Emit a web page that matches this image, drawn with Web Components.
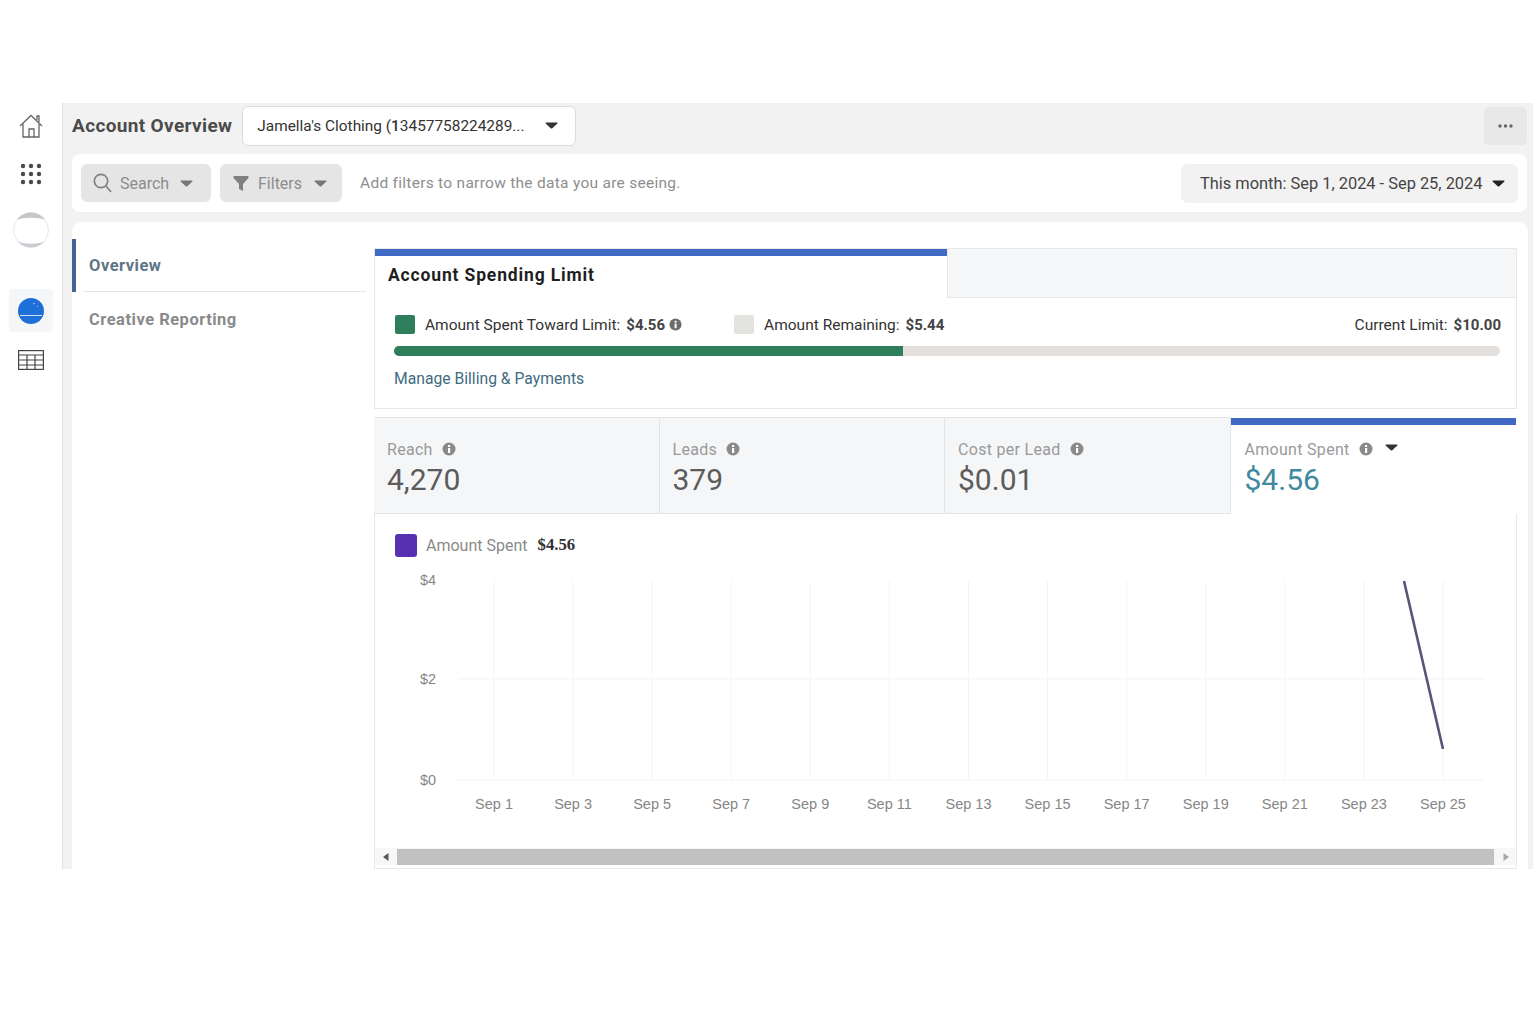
<!DOCTYPE html>
<html>
<head>
<meta charset="utf-8">
<title>Account Overview</title>
<style>
html,body{margin:0;background:#fff;font-family:Roboto,"Liberation Sans",sans-serif;}
body{padding:103px 0 155px 0;}
</style>
</head>
<body>
<ads-app>
	<ads-rail slot="rail"></ads-rail>
	<ads-header slot="main"></ads-header>
	<ads-toolbar slot="main"></ads-toolbar>
	<ads-panel slot="main">
		<ads-sidenav slot="nav"></ads-sidenav>
		<ads-spend slot="content"></ads-spend>
		<ads-metrics slot="content"></ads-metrics>
		<ads-chart slot="content"></ads-chart>
	</ads-panel>
</ads-app>

<script>
'use strict';

function define(name,css,html){
	customElements.define(name,class extends HTMLElement{
		constructor(){
			super();
			let shadow = this.attachShadow({mode: 'open'});
			shadow.innerHTML = '<style>'+css+'</style>'+html;
		}
	});
}

define('drop-caret',`
:host{display:inline-block;width:13px;height:7px;flex:none;}
svg{display:block;width:100%;height:100%;}
`,'<svg viewBox="0 0 13 7"><path d="M1 .5h11a.6.6 0 0 1 .4 1L7 6.4a.8.8 0 0 1-1 0L.6 1.5A.6.6 0 0 1 1 .5z" fill="currentColor"/></svg>');

define('info-dot',`
:host{display:inline-block;width:14px;height:14px;flex:none;}
svg{display:block;width:100%;height:100%;}
`,'<svg viewBox="0 0 14 14"><circle cx="7" cy="7" r="6.5" fill="currentColor"/><rect x="6" y="6" width="2.2" height="5" fill="#fff"/><rect x="6" y="3" width="2.2" height="2" fill="#fff"/></svg>');

define('ads-app',`
:host{display:flex;height:766px;width:1536px;}
.rail{width:62px;flex:none;}
.main{width:1471px;flex:none;background:#f2f2f2;border-left:1px solid #e3e3e3;box-sizing:border-box;display:flex;flex-direction:column;}
`,'<div class="rail"><slot name="rail"></slot></div><div class="main"><slot name="main"></slot></div>');

define('ads-rail',`
:host{display:flex;flex-direction:column;align-items:center;padding-top:10px;}
.cell{display:flex;align-items:center;justify-content:center;width:44px;}
.home{height:25px;}
.apps{height:23px;margin-top:24px;}
.acct{height:36px;margin-top:27px;}
.active{height:43px;margin-top:41px;background:#f4f6f8;border-radius:4px;}
.table{height:22px;margin-top:17px;}
svg{display:block;}
`,`
<div class="cell home"><svg width="26" height="26" viewBox="0 0 26 26" fill="none" stroke="#666" stroke-width="1.3"><path d="M2 13 13 2.5 24 13"/><path d="M5 11v13h16V11"/><path d="M11 24v-8h5v8"/><path d="M19 7V3h2v6"/></svg></div>
<div class="cell apps"><svg width="22" height="22" viewBox="0 0 22 22" fill="#4a4a4a"><circle cx="3" cy="3" r="2.2"/><circle cx="11" cy="3" r="2.2"/><circle cx="19" cy="3" r="2.2"/><circle cx="3" cy="11" r="2.2"/><circle cx="11" cy="11" r="2.2"/><circle cx="19" cy="11" r="2.2"/><circle cx="3" cy="19" r="2.2"/><circle cx="11" cy="19" r="2.2"/><circle cx="19" cy="19" r="2.2"/></svg></div>
<div class="cell acct"><svg width="36" height="36" viewBox="0 0 36 36"><circle cx="18" cy="18" r="17.3" fill="#fff" stroke="#e6e8ea" stroke-width="1"/><path d="M3.650 8A17.500 17.500 0 0 1 32.350 8C26 5 10 5 3.650 8z" fill="#c4c8cc"/><path d="M4.400 29C10 32.500 26 32.500 31.600 29A17.500 17.500 0 0 1 4.400 29z" fill="#c9ccd0"/></svg></div>
<div class="cell active"><svg width="28" height="28" viewBox="0 0 28 28"><circle cx="14" cy="14" r="13" fill="#1f6fd8"/><path d="M3 18.500h22" stroke="#cfe0f5" stroke-width="1"/><path d="M16 7l2-1M20 10l1-1" stroke="#9cc0ee" stroke-width="1"/></svg></div>
<div class="cell table"><svg width="26" height="20" viewBox="0 0 26 20" fill="none" stroke="#444" stroke-width="1.200"><rect x=".6" y=".6" width="24.800" height="18.800"/><path d="M.6 5h24.800M.6 10h24.800M.6 15h24.800M9 5v14.400M17 5v14.400"/></svg></div>
`);

define('ads-header',`
:host{display:flex;align-items:center;height:51px;box-sizing:border-box;padding:0 6px 6px 9px;color:#444;flex:none;}
h1{margin:0 10px 0 0;font:700 19px Roboto,sans-serif;letter-spacing:.36px;color:#4b4b4b;white-space:nowrap;}
.select{display:flex;align-items:center;justify-content:space-between;box-sizing:border-box;width:334px;height:40px;padding:0 17px 0 14px;background:#fff;border:1px solid #dcdcdc;border-radius:6px;font-size:15.400px;color:#333;}
b{font-weight:500;}
.more{margin-left:auto;width:43px;height:38px;display:flex;align-items:center;justify-content:center;background:#e8e8e8;border-radius:5px;}
svg{display:block;}
`,`
<h1>Account Overview</h1>
<div class="select"><span>Jamella's Clothing (<b>1</b>3457758224289...</span><drop-caret></drop-caret></div>
<div class="more"><svg width="15" height="4" viewBox="0 0 15 4" fill="#666"><circle cx="2" cy="2" r="1.700"/><circle cx="7.500" cy="2" r="1.700"/><circle cx="13" cy="2" r="1.700"/></svg></div>
`);

define('ads-toolbar',`
:host{display:flex;align-items:center;gap:9px;box-sizing:border-box;flex:none;height:58px;margin-left:9px;width:1455px;padding:0 9px;background:#fff;border-radius:8px;}
.btn{display:flex;align-items:center;box-sizing:border-box;height:38px;background:#e5e5e5;border-radius:6px;color:#8c8c8c;font-size:16px;padding-left:12px;gap:8px;}
.search{width:130px;}
.filters{width:122px;gap:9px;padding-left:13px;}
drop-caret{color:#777;margin-left:3px;}
.hint{margin-left:9px;color:#8e8e8e;font-size:15.500px;letter-spacing:.28px;}
.date{margin-left:auto;display:flex;align-items:center;justify-content:space-between;box-sizing:border-box;width:337px;height:39px;padding:0 13px 0 19px;background:#f2f2f2;border-radius:7px;color:#444;font-size:16.400px;white-space:nowrap;}
.date drop-caret{color:#222;margin:0;}
svg{display:block;flex:none;}
`,`
<div class="btn search"><svg width="19" height="20" viewBox="0 0 19 20" fill="none" stroke="#808080" stroke-width="1.700"><circle cx="8" cy="8" r="6.700"/><path d="M13 13l5 6"/></svg><span>Search</span><drop-caret></drop-caret></div>
<div class="btn filters"><svg width="16" height="17" viewBox="0 0 16 17" fill="#808080"><path d="M.5 1h15v2L10 9v7l-4-2V9L.5 3z"/></svg><span>Filters</span><drop-caret></drop-caret></div>
<div class="hint">Add filters to narrow the data you are seeing.</div>
<div class="date"><span>This month: Sep 1, 2024 - Sep 25, 2024</span><drop-caret></drop-caret></div>
`);

define('ads-panel',`
:host{display:flex;flex:1;min-height:0;margin:10px 0 0 9px;width:1456px;background:#fff;border-radius:10px 10px 0 0;box-sizing:border-box;}
.nav{width:302px;flex:none;padding-top:17px;box-sizing:border-box;}
.content{width:1143px;flex:none;padding-top:26px;display:flex;flex-direction:column;box-sizing:border-box;}
`,'<div class="nav"><slot name="nav"></slot></div><div class="content"><slot name="content"></slot></div>');

define('ads-sidenav',`
:host{display:block;}
.item{display:flex;align-items:center;font:700 16.500px Roboto,sans-serif;letter-spacing:.5px;padding-left:17px;}
.on{height:53px;color:#5f7485;border-left:4px solid #46628f;padding-left:13px;box-sizing:border-box;position:relative;margin-right:8px;}
.on::after{content:"";position:absolute;left:8px;right:0;bottom:0;height:1px;background:#e4e4e4;}
.off{height:55px;color:#8a8a8a;}
`,'<div class="item on">Overview</div><div class="item off">Creative Reporting</div>');

define('ads-spend',`
:host{display:block;flex:none;height:161px;box-sizing:border-box;border:1px solid #e8e8e8;color:#333;}
.tabs{display:flex;height:49px;}
.tab{width:572px;flex:none;box-sizing:border-box;border-top:7px solid #4169c4;padding:9px 0 0 13px;font:700 17.500px Roboto,sans-serif;color:#1f1f1f;letter-spacing:.85px;}
.rest{flex:1;background:#f5f6f7;border-left:1px solid #e8e8e8;border-bottom:1px solid #e8e8e8;}
.legend{display:flex;align-items:center;height:37px;margin:8px 0 3px 0;padding:0 15px 0 20px;font-size:15.500px;}
.sw{width:20px;height:19px;border-radius:2px;margin-right:10px;flex:none;}
b{font-weight:700;font-size:15px;margin-left:6px;color:#444;}
info-dot{width:13px;height:13px;color:#6c6c6c;margin-left:4px;}
.second{margin-left:52px;}
.limit{margin-left:auto;}
.bar{height:10px;margin:0 16px 0 19px;background:#e2dfdc;border-radius:5px;overflow:hidden;}
.fill{width:46%;height:100%;background:#2e7d5b;}
a{display:block;margin:13px 0 0 19px;color:#3f6c80;font-size:15.700px;}
`,`
<div class="tabs"><div class="tab">Account Spending Limit</div><div class="rest"></div></div>
<div class="legend">
	<span class="sw" style="background:#2e7d5b"></span><span>Amount Spent Toward Limit:</span><b>$4.56</b><info-dot></info-dot>
	<span class="sw second" style="background:#e3e3e0"></span><span>Amount Remaining:</span><b>$5.44</b>
	<span class="limit">Current Limit:</span><b>$10.00</b>
</div>
<div class="bar"><div class="fill"></div></div>
<a>Manage Billing &amp; Payments</a>
`);

define('metric-tab',`
:host{display:block;box-sizing:border-box;width:285.500px;height:97px;padding:22px 13px 0;background:#f5f6f7;border-right:1px solid #e4e4e4;border-bottom:1px solid #e4e4e4;border-top:1px solid #e4e4e4;}
:host([active]){background:#fff;border:0;border-top:7px solid #4169c4;height:96px;margin-top:1px;padding:15px 13px 0 14px;}
.label{display:flex;align-items:center;gap:9px;height:18px;color:#9a9a9a;font-size:16px;letter-spacing:.3px;}
info-dot{color:#8a8a8a;}
.value{margin-top:4px;font-size:30px;line-height:36px;color:#5c5c5c;}
:host([active]) .value{color:#41899e;}
`,`
<div class="label"><slot name="label"></slot><info-dot></info-dot><slot name="caret"></slot></div>
<div class="value"><slot></slot></div>
`);

define('ads-metrics',`
:host{display:flex;flex:none;margin-top:8px;height:97px;}
drop-caret{color:#333;margin:-4px 0 0 3px;}
`,`
<metric-tab><span slot="label">Reach</span>4,270</metric-tab>
<metric-tab><span slot="label">Leads</span>379</metric-tab>
<metric-tab><span slot="label">Cost per Lead</span>$0.01</metric-tab>
<metric-tab active><span slot="label">Amount Spent</span><drop-caret slot="caret"></drop-caret>$4.56</metric-tab>
`);

define('ads-chart',`
:host{display:flex;flex-direction:column;flex:1;min-height:0;box-sizing:border-box;border:1px solid #e8e8e8;border-top:0;}
.legend{display:flex;align-items:center;height:24px;padding:19px 0 0 20px;flex:none;font-size:16px;color:#8a8a8a;}
.sw{width:22px;height:23px;border-radius:3px;background:#5530b0;margin-right:9px;}
b{font:700 16.800px "Liberation Serif",serif;color:#333;margin-left:10px;}
svg{display:block;flex:1;min-height:0;width:100%;}
text{font:14.500px "Liberation Sans",sans-serif;fill:#868686;}
.scroll{flex:none;display:flex;align-items:center;height:17px;margin:0 0 3px 0;background:#f7f7f7;}
.arrow{width:22px;height:17px;display:flex;align-items:center;justify-content:center;flex:none;}
.thumb{width:1097px;height:16px;background:#c1c1c1;flex:none;}
.end{width:21px;margin-left:auto;}
`,`
<div class="legend"><span class="sw"></span><span>Amount Spent</span><b>$4.56</b></div>
<svg id="plot" viewBox="375 557 1141 291" preserveAspectRatio="xMinYMin"></svg>
<div class="scroll">
	<span class="arrow"><svg width="6" height="8" viewBox="0 0 6 8" style="flex:none;width:6px"><path d="M5.500 0v8L0 4z" fill="#555"/></svg></span>
	<div class="thumb"></div>
	<span class="arrow end"><svg width="6" height="8" viewBox="0 0 6 8" style="flex:none;width:6px"><path d="M.5 0v8L6 4z" fill="#a8a8a8"/></svg></span>
</div>
`);

// chart is drawn from data so the ticks stay even
let plot = document.querySelector('ads-chart').shadowRoot.getElementById('plot');
let days = [1,3,5,7,9,11,13,15,17,19,21,23,25];
let marks = '';
[[580,'$4'],[679,'$2'],[780,'$0']].forEach((row)=>{
	if(row[0]>580) marks += '<line x1="458" x2="1484" y1="'+row[0]+'" y2="'+row[0]+'" stroke="#f3f3f3"/>';
	marks += '<text x="428" y="'+(row[0]+5)+'" text-anchor="middle">'+row[1]+'</text>';
});
days.forEach((d,i)=>{
	let x = 494 + i*79.08;
	marks += '<line x1="'+x+'" x2="'+x+'" y1="580" y2="780" stroke="#f5f5f5"/>';
	marks += '<text x="'+x+'" y="809" text-anchor="middle">Sep '+d+'</text>';
});
marks += '<line x1="1404" y1="581" x2="1443" y2="749" stroke="#5b5478" stroke-width="2.600"/>';
plot.innerHTML = marks;
</script>
</body>
</html>
